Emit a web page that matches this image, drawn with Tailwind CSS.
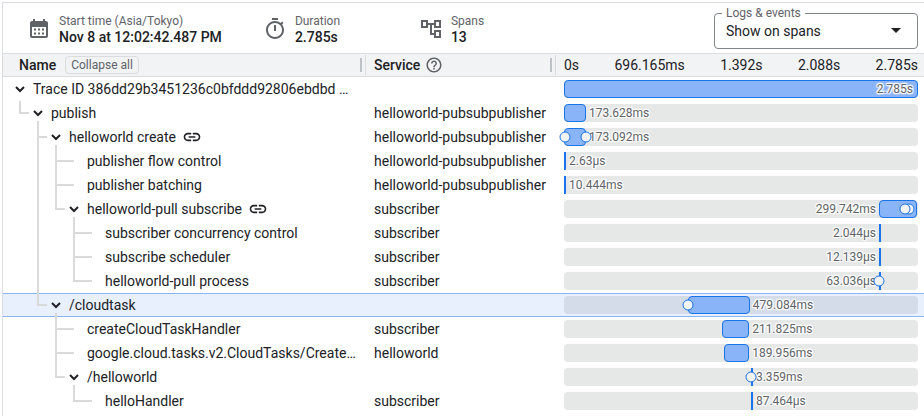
<!DOCTYPE html>
<html lang="en">
<head>
<meta charset="utf-8">
<title>Trace details</title>
<script src="https://cdn.jsdelivr.net/npm/@tailwindcss/browser@4"></script>
</head>
<body class="bg-white pl-[2px] pt-[2px] font-[Roboto,sans-serif] text-sm text-[#202124]">
<main class="min-h-[414px] border-t border-l border-[#dadce0]">
  <header class="flex h-[50px] items-center pt-px pl-6 pr-[6px]">
    <div class="flex min-w-[156px] items-center gap-2 pr-[41px]">
      <svg class="size-6 shrink-0 fill-[#5f6368]" viewBox="0 0 24 24" aria-hidden="true"><path fill-rule="evenodd" d="M19 4h-1V2h-2v2H8V2H6v2H5c-1.1 0-2 .9-2 2v13c0 1.1.9 2 2 2h14c1.1 0 2-.9 2-2V6c0-1.100-.9-2-2-2zM5 10h14v9H5z"/><path d="M7 11.500h2v2H7zM11 11.500h2v2h-2zM15 11.500h2v2h-2zM7 15.500h2v2H7zM11 15.500h2v2h-2zM15 15.500h2v2h-2z"/></svg>
      <dl><dt class="text-xs leading-4 text-[#5f6368]">Start time (Asia/Tokyo)</dt><dd class="leading-4 font-medium">Nov 8 at 12:02:42.487 PM</dd></dl>
    </div>
    <div class="flex min-w-[156px] items-center gap-2">
      <svg class="size-6 shrink-0 fill-[#5f6368]" viewBox="0 0 24 24" aria-hidden="true"><path d="M9 1h6v2H9zM11 14h2V8h-2v6zm8.030-6.610l1.420-1.420c-.430-.510-.9-.990-1.410-1.410l-1.420 1.420C16.070 4.740 14.120 4 12 4c-4.970 0-9 4.030-9 9s4.020 9 9 9 9-4.030 9-9c0-2.120-.740-4.070-1.970-5.610zM12 20c-3.870 0-7-3.130-7-7s3.130-7 7-7 7 3.130 7 7-3.130 7-7 7z"/></svg>
      <dl><dt class="text-xs leading-4 text-[#5f6368]">Duration</dt><dd class="leading-4 font-medium">2.785s</dd></dl>
    </div>
    <div class="flex items-center gap-2">
      <svg class="size-6 shrink-0 fill-[#5f6368]" viewBox="0 0 24 24" aria-hidden="true"><path d="M22 11V3h-7v3H9V3H2v8h7V8h2v10h4v3h7v-8h-7v3h-2V8h2v3h7zM7 9H4V5h3v4zm10 6h3v4h-3v-4zm0-10h3v4h-3V5z"/></svg>
      <dl><dt class="text-xs leading-4 text-[#5f6368]">Spans</dt><dd class="leading-4 font-medium">13</dd></dl>
    </div>
    <div class="relative ml-auto w-[204px] pt-1">
      <label for="events" class="absolute left-2 -top-1 bg-white px-1 text-xs leading-4 text-[#5f6368]">Logs &amp; events</label>
      <select id="events" class="h-9 w-full appearance-none rounded border border-[#80868b] bg-transparent px-[11px] text-sm"><option>Show on spans</option></select>
      <svg class="pointer-events-none absolute right-[17px] top-[19px] h-[5px] w-[10px] fill-[#202124]" viewBox="0 0 10 5" aria-hidden="true"><path d="M0 0h10L5 5z"/></svg>
    </div>
  </header>
  <table class="w-full table-fixed border-collapse">
    <colgroup><col class="w-[363px]"><col class="w-[190px]"><col></colgroup>
    <thead>
      <tr class="h-6 bg-[#f1f3f4] text-left shadow-[inset_0_1px_#dadce0,inset_0_-1px_#dadce0]">
        <th class="p-0 font-medium" scope="col"><div class="flex h-5 items-center border-r border-[#dadce0] pl-4 pr-[3px]">Name<button class="ml-[9px] h-[18px] rounded border border-[#dadce0] px-[5px] text-xs leading-4 font-normal text-[#5f6368]">Collapse all</button><span class="ml-auto h-[14px] w-[2px] bg-[#bdc1c6]"></span></div></th>
        <th class="p-0 font-medium" scope="col"><div class="flex h-5 items-center border-r border-[#dadce0] pl-2 pr-[3px]">Service<svg class="ml-[5px] size-[18px] fill-[#5f6368]" viewBox="0 0 24 24" role="img" aria-label="Help"><path d="M11 18h2v-2h-2v2zm1-16C6.480 2 2 6.480 2 12s4.480 10 10 10 10-4.480 10-10S17.520 2 12 2zm0 18c-4.410 0-8-3.590-8-8s3.590-8 8-8 8 3.590 8 8-3.590 8-8 8zm0-14c-2.210 0-4 1.790-4 4h2c0-1.100.9-2 2-2s2 .9 2 2c0 2-3 1.750-3 5h2c0-2.250 3-2.500 3-5 0-2.210-1.790-4-4-4z"/></svg><span class="ml-auto h-[14px] w-[2px] bg-[#bdc1c6]"></span></div></th>
        <th class="p-0 font-normal" scope="col"><div class="flex justify-between pl-2 pr-[6px]"><span>0s</span><span>696.165ms</span><span>1.392s</span><span>2.088s</span><span>2.785s</span></div></th>
      </tr>
    </thead>
    <tbody id="spans"></tbody>
  </table>
</main>
<script>
// kids: has a chevron; through: depths whose guide continues past this row; last: final sibling
// start and width are percentages of the trace; marks are event positions on the same scale
const P = 'helloworld-pubsubpublisher', S = 'subscriber';
const spans = [
  {name: 'Trace ID 386dd29b3451236c0bfddd92806ebdbd …', d: 0, kids: 1, svc: '', time: '2.785s', start: 0, width: 100, side: 'in'},
  {name: 'publish', d: 1, kids: 1, last: 1, svc: P, time: '173.628ms', start: 0, width: 6.2},
  {name: 'helloworld create', d: 2, kids: 1, link: 1, svc: P, time: '173.092ms', start: 0, width: 6.2, marks: [0.2, 6.2]},
  {name: 'publisher flow control', d: 3, through: [1], svc: P, time: '2.63µs', start: 0},
  {name: 'publisher batching', d: 3, through: [1], svc: P, time: '10.444ms', start: 0},
  {name: 'helloworld-pull subscribe', d: 3, kids: 1, last: 1, link: 1, through: [1], svc: S, time: '299.742ms', start: 89, width: 10.8, side: 'left', marks: [97.5, 96.4]},
  {name: 'subscriber concurrency control', d: 4, through: [1], svc: S, time: '2.044µs', start: 89, side: 'left'},
  {name: 'subscribe scheduler', d: 4, through: [1], svc: S, time: '12.139µs', start: 89, side: 'left'},
  {name: 'helloworld-pull process', d: 4, last: 1, through: [1], svc: S, time: '63.036µs', start: 89, side: 'left', marks: [89]},
  {name: '/cloudtask', d: 2, kids: 1, last: 1, selected: 1, svc: '', time: '479.084ms', start: 35, width: 17.5, marks: [35]},
  {name: 'createCloudTaskHandler', d: 3, svc: S, time: '211.825ms', start: 44.7, width: 7.6},
  {name: 'google.cloud.tasks.v2.CloudTasks/Create…', d: 3, svc: 'helloworld', time: '189.956ms', start: 45.3, width: 7},
  {name: '/helloworld', d: 3, kids: 1, last: 1, svc: '', time: '3.359ms', start: 52.8, marks: [52.8]},
  {name: 'helloHandler', d: 4, last: 1, svc: S, time: '87.464µs', start: 52.8},
];
const halo = '[text-shadow:-1px_-1px_1px_#fff,1px_-1px_1px_#fff,-1px_1px_1px_#fff,1px_1px_1px_#fff,0_0_2px_#fff,0_0_2px_#fff,0_0_3px_#fff]';
function guides(s) {
  let p = '';
  for (const t of s.through || []) p += `M${t * 18 + 9} 0V24`;
  if (s.d) {
    const x = s.d * 18 - 9;
    p += `M${x} 0V${s.last ? 13 : 24}M${x} 12H${s.kids ? x + 9 : x + 18}`;
  }
  if (s.kids) p += `M${s.d * 18 + 9} 20V24`;
  const w = s.d * 18;
  return `<svg class="h-6 shrink-0 overflow-visible fill-none stroke-[#dadada] stroke-2" style="width:${w}px" aria-hidden="true"><path d="${p}"/></svg>`;
}
function row(s) {
  const toggle = s.kids
    ? `<button class="relative h-6 w-[18px] shrink-0" aria-label="Collapse ${s.name}"><svg class="h-6 w-[18px] fill-none stroke-[#202124] stroke-2" viewBox="0 0 18 24"><path d="M5 10l4 4 4-4"/></svg></button>`
    : '<span class="w-[18px] shrink-0"></span>';
  const link = s.link ? `<a href="#spans" aria-label="Linked spans" class="ml-[6px] shrink-0"><svg class="size-5 fill-[#202124]" viewBox="0 0 24 24"><path d="M3.900 12c0-1.710 1.390-3.100 3.100-3.100h4V7H7c-2.760 0-5 2.240-5 5s2.240 5 5 5h4v-1.900H7c-1.710 0-3.100-1.390-3.100-3.100zM8 13h8v-2H8v2zm9-6h-4v1.900h4c1.710 0 3.100 1.390 3.100 3.100s-1.390 3.100-3.100 3.100h-4V17h4c2.760 0 5-2.240 5-5s-2.240-5-5-5z"/></svg></a>` : '';
  const bar = s.width
    ? `<div class="absolute inset-y-0 rounded border border-[#1a73e8] bg-[#8ab4f8]" style="left:${s.start}%;width:${s.width}%"></div>`
    : `<div class="absolute inset-y-0 w-[2px] bg-[#1a73e8]" style="left:${s.start}%"></div>`;
  const at = s.side === 'in' ? 'right:5px' : s.side === 'left' ? `right:calc(${100 - s.start}% + 3px)`
    : `left:calc(${s.start + (s.width || 0)}% + ${s.width ? 3 : 5}px)`;
  const marks = (s.marks || []).map(m => `<i class="absolute top-1/2 size-[11px] -translate-x-1/2 -translate-y-1/2 rounded-full border border-[#1a73e8] bg-[#f1f3f4]" style="left:${m}%"></i>`).join('');
  return `<tr class="h-6 ${s.selected ? 'bg-[#e8f0fe] shadow-[inset_0_1px_#8ab4f8,inset_0_-1px_#8ab4f8]' : ''}">
    <td class="p-0"><div class="flex h-6 items-center pl-2">${guides(s)}${toggle}<span class="ml-1 whitespace-nowrap">${s.name}</span>${link}</div></td>
    <td class="p-0 pl-2 whitespace-nowrap">${s.svc}</td>
    <td class="p-0 pl-2 pr-[6px]"><div class="relative h-[18px] rounded ${s.selected ? 'bg-[#d3dce8]' : 'bg-[#e6e8e7]'}">${bar}<span class="absolute top-px text-xs leading-4 text-[#5f6368] ${halo}" style="${at}">${s.time}</span>${marks}</div></td>
  </tr>`;
}
document.getElementById('spans').innerHTML = spans.map(row).join('');
</script>
</body>
</html>
